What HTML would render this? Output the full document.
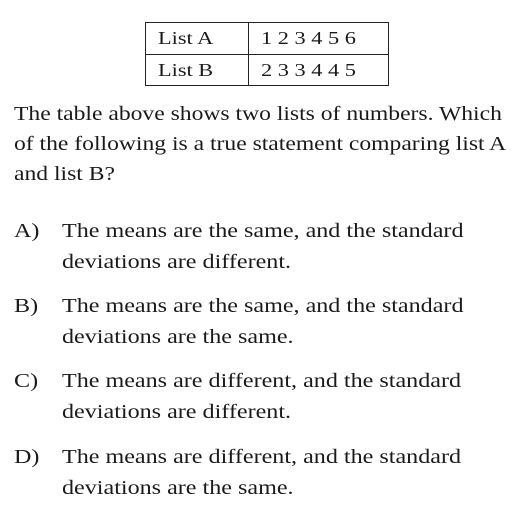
<!DOCTYPE html>
<html><head><style>
body{margin:0;width:517px;height:523px;background:#fff;font-family:"Liberation Serif",serif;color:#1a1a1a;position:relative;overflow:hidden}
.t{position:absolute;font-size:20px;white-space:nowrap;line-height:1;transform:scaleX(1.18);transform-origin:0 0}
.o{transform:scaleX(1.205)}
.tb{position:absolute;left:145px;top:22px;width:244px;height:64px;border:1.5px solid #222;box-sizing:border-box}
.tb .h{position:absolute;left:0;right:0;top:31px;border-top:1.5px solid #222}
.tb .v{position:absolute;left:102px;top:0;bottom:0;border-left:1.5px solid #222}
.c{position:absolute;font-size:18px;line-height:1;transform:scaleX(1.24);transform-origin:0 0;white-space:nowrap}
</style></head><body>
<div class="tb"><div class="h"></div><div class="v"></div></div>
<div class="c" style="left:158px;top:29px">List A</div>
<div class="c" style="left:261px;top:29px">1 2 3 4 5 6</div>
<div class="c" style="left:158px;top:61px">List B</div>
<div class="c" style="left:261px;top:61px">2 3 3 4 4 5</div>
<div class="t" style="left:14px;top:104px">The table above shows two lists of numbers. Which</div>
<div class="t" style="left:14px;top:134px">of the following is a true statement comparing list A</div>
<div class="t" style="left:14px;top:164px">and list B?</div>
<div class="t o" style="left:14px;top:221px">A)</div>
<div class="t o" style="left:62px;top:221px">The means are the same, and the standard</div>
<div class="t o" style="left:62px;top:252px">deviations are different.</div>
<div class="t o" style="left:14px;top:296px">B)</div>
<div class="t o" style="left:62px;top:296px">The means are the same, and the standard</div>
<div class="t o" style="left:62px;top:327px">deviations are the same.</div>
<div class="t o" style="left:14px;top:371px">C)</div>
<div class="t o" style="left:62px;top:371px">The means are different, and the standard</div>
<div class="t o" style="left:62px;top:402px">deviations are different.</div>
<div class="t o" style="left:14px;top:447px">D)</div>
<div class="t o" style="left:62px;top:447px">The means are different, and the standard</div>
<div class="t o" style="left:62px;top:478px">deviations are the same.</div>
</body></html>
